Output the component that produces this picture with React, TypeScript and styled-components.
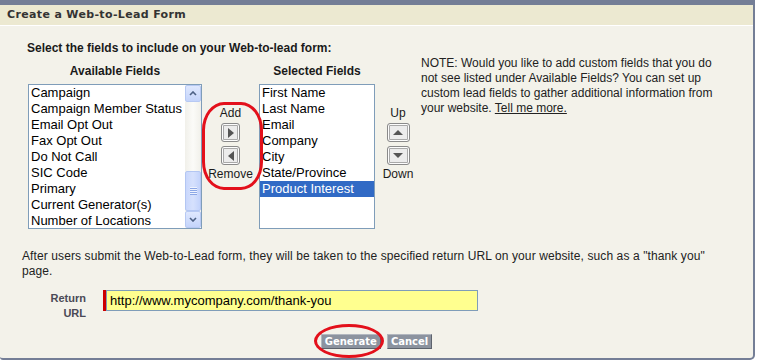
import React from "react";
import styled, { createGlobalStyle } from "styled-components";

const Global = createGlobalStyle`
  html, body { margin: 0; padding: 0; background: #fff; }
  body { font-family: "Liberation Sans", Arial, sans-serif; font-size: 12px; color: #222; }
  * { box-sizing: border-box; }
`;

const Panel = styled.div`
  width: 755px;
  border-top: 5px solid #747e96;
  border-right: 2px solid #747e96;
  border-bottom: 2px solid #747e96;
  border-bottom-right-radius: 5px;
  border-bottom-left-radius: 3px;
  overflow: hidden;
  background: #f3f2ea;
`;

const Header = styled.div`
  height: 21px;
  background: #ece9d1;
  border-bottom: 1px solid #fff;
  padding-left: 7px;
  font: bold 11px "DejaVu Sans", Verdana, sans-serif;
  letter-spacing: 0.35px;
  line-height: 20px;
  color: #333;
`;

const Body = styled.div`
  padding: 15px 0 9px 0;
`;

const TopRow = styled.div`
  display: flex;
  padding-left: 27px;
`;

const FieldPicker = styled.div`
  display: flex;
  flex-direction: column;
`;

const Instruction = styled.div`
  font-weight: bold;
  line-height: 15px;
  margin-bottom: 8px;
  color: #1a1a1a;
`;

const ColumnsGrid = styled.div`
  display: grid;
  grid-template-columns: 174px 57px 116px 46px;
  grid-template-rows: 15px 145px;
  row-gap: 5px;
  margin-left: 1px;
`;

const Heading = styled.div<{ $col: number }>`
  grid-column: ${(p) => p.$col};
  grid-row: 1;
  font-weight: bold;
  line-height: 15px;
  text-align: center;
  color: #1a1a1a;
`;

const ListBox = styled.div<{ $col: number }>`
  grid-column: ${(p) => p.$col};
  grid-row: 2;
  display: flex;
  height: 145px;
  border: 1px solid #7f9db9;
  background: #fff;
  overflow: hidden;
`;

const Options = styled.div`
  flex: 1;
  min-width: 0;
`;

const Option = styled.div<{ $selected?: boolean }>`
  height: 16px;
  line-height: 16px;
  padding-left: 2px;
  font-size: 13px;
  white-space: nowrap;
  color: ${(p) => (p.$selected ? "#fff" : "#000")};
  background: ${(p) => (p.$selected ? "#316ac5" : "transparent")};
`;

const Scrollbar = styled.div`
  width: 16px;
  display: flex;
  flex-direction: column;
  background: #f6f6f0;
`;

const ScrollArrow = styled.div`
  height: 17px;
  display: flex;
  align-items: center;
  justify-content: center;
  border: 1px solid #b7c9f3;
  border-radius: 2px;
  background: linear-gradient(180deg, #dfe8fe 0%, #c4d4fb 100%);
`;

const Track = styled.div`
  flex: 1;
  display: flex;
  flex-direction: column;
  background: linear-gradient(90deg, #f1f0ea 0%, #fbfbf8 50%, #f1f0ea 100%);
`;

const Thumb = styled.div`
  margin-top: 69px;
  height: 40px;
  display: flex;
  align-items: center;
  justify-content: center;
  border: 1px solid #b3c6f2;
  border-radius: 2px;
  background: linear-gradient(90deg, #c9d7fc 0%, #d6e1fd 50%, #c3d3fb 100%);
`;

const ActionColumn = styled.div<{ $col: number }>`
  grid-column: ${(p) => p.$col};
  grid-row: 2;
  position: relative;
  display: flex;
  flex-direction: column;
  align-items: center;
  padding-top: 22px;
`;

const Caption = styled.div<{ $gap?: number }>`
  line-height: 15px;
  margin-top: ${(p) => p.$gap ?? 0}px;
  color: #1a1a1a;
`;

const ArrowButton = styled.div<{ $w: number; $gap: number }>`
  width: ${(p) => p.$w}px;
  height: 19px;
  margin-top: ${(p) => p.$gap}px;
  display: flex;
  align-items: center;
  justify-content: center;
  border: 1px solid #8a8a8a;
  border-radius: 3px;
  background: #ececec;
  box-shadow: inset 0 0 0 1px #fdfdfd, inset 0 0 0 2px #a9a9a9;
`;

const Ring = styled.div<{ $l: number; $t: number; $w: number; $h: number; $r: string }>`
  position: absolute;
  left: ${(p) => p.$l}px;
  top: ${(p) => p.$t}px;
  width: ${(p) => p.$w}px;
  height: ${(p) => p.$h}px;
  border: 3px solid #e3101b;
  border-radius: ${(p) => p.$r};
  pointer-events: none;
`;

const Note = styled.div`
  margin-top: 15px;
  width: 310px;
  line-height: 15px;
  color: #222;
`;

const MoreLink = styled.a`
  color: #222;
  text-decoration: underline;
`;

const AfterText = styled.div`
  margin-top: 20px;
  padding-left: 22px;
  width: 722px;
  line-height: 15px;
  letter-spacing: 0.1px;
  color: #222;
`;

const ReturnRow = styled.div`
  display: flex;
  align-items: flex-start;
  margin-top: 11px;
  padding-left: 22px;
  height: 31px;
`;

const FieldLabel = styled.div`
  width: 64px;
  padding-top: 1px;
  text-align: right;
  font-weight: bold;
  font-size: 11px;
  line-height: 15px;
  color: #4a4a56;
`;

const RequiredBar = styled.div`
  width: 3px;
  height: 21px;
  margin-left: 17px;
  background: #c00;
`;

const UrlInput = styled.input`
  width: 372px;
  height: 21px;
  margin: 0;
  padding: 0 3px;
  border: 1px solid #7f9db9;
  background: #ffff8f;
  font: 13px "Liberation Sans", Arial, sans-serif;
  color: #000;
  outline: none;
`;

const ButtonRow = styled.div`
  display: flex;
  justify-content: center;
  gap: 6px;
  margin-top: 13px;
`;

const ButtonSlot = styled.div`
  position: relative;
`;

const ActionButton = styled.button`
  height: 15px;
  margin: 0;
  padding: 0 3px;
  font: bold 10px "DejaVu Sans", Verdana, sans-serif;
  line-height: 13px;
  color: #fff;
  background: #8c939f;
  border: 1px solid;
  border-color: #b2b7bf #5d636d #5d636d #b2b7bf;
  cursor: pointer;
`;

const Chevron = ({ down }: { down?: boolean }) => (
  <svg width="8" height="5" viewBox="0 0 8 5">
    <polyline
      points={down ? "1,1 4,4 7,1" : "1,4 4,1 7,4"}
      fill="none"
      stroke="#4d6185"
      strokeWidth="1.6"
    />
  </svg>
);

const Grip = () => (
  <svg width="7" height="8" viewBox="0 0 7 8">
    {[0, 2, 4, 6].map((y) => (
      <g key={y}>
        <rect x="0" y={y} width="7" height="1" fill="#eef3ff" />
        <rect x="0" y={y + 1} width="7" height="1" fill="#8ca7e6" />
      </g>
    ))}
  </svg>
);

const Tri = ({ dir }: { dir: "left" | "right" | "up" | "down" }) => {
  if (dir === "right")
    return (
      <svg width="6" height="10" viewBox="0 0 6 10">
        <polygon points="0,0 6,5 0,10" fill="#555" />
      </svg>
    );
  if (dir === "left")
    return (
      <svg width="6" height="10" viewBox="0 0 6 10">
        <polygon points="6,0 0,5 6,10" fill="#555" />
      </svg>
    );
  if (dir === "up")
    return (
      <svg width="10" height="5" viewBox="0 0 10 5">
        <polygon points="0,5 5,0 10,5" fill="#555" />
      </svg>
    );
  return (
    <svg width="10" height="5" viewBox="0 0 10 5">
      <polygon points="0,0 5,5 10,0" fill="#555" />
    </svg>
  );
};

const available = [
  "Campaign",
  "Campaign Member Status",
  "Email Opt Out",
  "Fax Opt Out",
  "Do Not Call",
  "SIC Code",
  "Primary",
  "Current Generator(s)",
  "Number of Locations",
];

const selected = [
  "First Name",
  "Last Name",
  "Email",
  "Company",
  "City",
  "State/Province",
  "Product Interest",
];

export default function App() {
  return (
    <>
      <Global />
      <Panel>
        <Header>Create a Web-to-Lead Form</Header>
        <Body>
          <TopRow>
            <FieldPicker>
              <Instruction>Select the fields to include on your Web-to-lead form:</Instruction>
              <ColumnsGrid>
                <Heading $col={1}>Available Fields</Heading>
                <Heading $col={3}>Selected Fields</Heading>
                <ListBox $col={1}>
                  <Options>
                    {available.map((f) => (
                      <Option key={f}>{f}</Option>
                    ))}
                  </Options>
                  <Scrollbar>
                    <ScrollArrow>
                      <Chevron />
                    </ScrollArrow>
                    <Track>
                      <Thumb>
                        <Grip />
                      </Thumb>
                    </Track>
                    <ScrollArrow>
                      <Chevron down />
                    </ScrollArrow>
                  </Scrollbar>
                </ListBox>
                <ActionColumn $col={2}>
                  <Caption>Add</Caption>
                  <ArrowButton $w={19} $gap={2}>
                    <Tri dir="right" />
                  </ArrowButton>
                  <ArrowButton $w={19} $gap={4}>
                    <Tri dir="left" />
                  </ArrowButton>
                  <Caption $gap={2}>Remove</Caption>
                  <Ring $l={0} $t={18} $w={61} $h={88} $r="22px / 28px" />
                </ActionColumn>
                <ListBox $col={3}>
                  <Options>
                    {selected.map((f, i) => (
                      <Option key={f} $selected={i === selected.length - 1}>
                        {f}
                      </Option>
                    ))}
                  </Options>
                </ListBox>
                <ActionColumn $col={4}>
                  <Caption>Up</Caption>
                  <ArrowButton $w={23} $gap={2}>
                    <Tri dir="up" />
                  </ArrowButton>
                  <ArrowButton $w={23} $gap={4}>
                    <Tri dir="down" />
                  </ArrowButton>
                  <Caption $gap={2}>Down</Caption>
                </ActionColumn>
              </ColumnsGrid>
            </FieldPicker>
            <Note>
              NOTE: Would you like to add custom fields that you do not see listed under Available
              Fields? You can set up custom lead fields to gather additional information from your
              website. <MoreLink href="#">Tell me more.</MoreLink>
            </Note>
          </TopRow>
          <AfterText>
            After users submit the Web-to-Lead form, they will be taken to the specified return URL
            on your website, such as a "thank you" page.
          </AfterText>
          <ReturnRow>
            <FieldLabel>
              Return
              <br />
              URL
            </FieldLabel>
            <RequiredBar />
            <UrlInput defaultValue="http://www.mycompany.com/thank-you" />
          </ReturnRow>
          <ButtonRow>
            <ButtonSlot>
              <ActionButton>Generate</ActionButton>
              <Ring $l={-7} $t={-10} $w={70} $h={34} $r="50%" />
            </ButtonSlot>
            <ButtonSlot>
              <ActionButton>Cancel</ActionButton>
            </ButtonSlot>
          </ButtonRow>
        </Body>
      </Panel>
    </>
  );
}
